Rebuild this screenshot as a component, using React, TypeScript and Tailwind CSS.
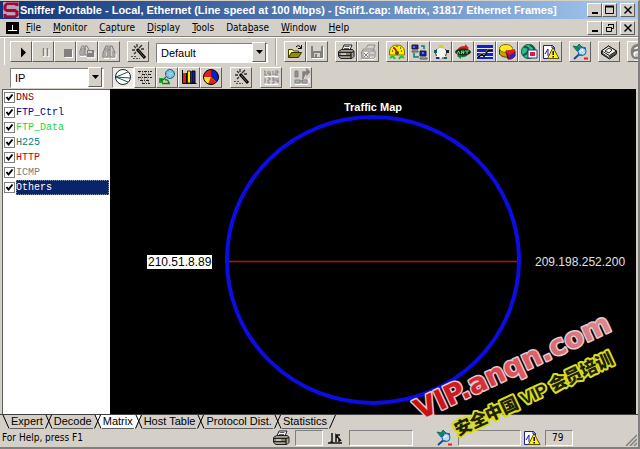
import { ReactNode } from 'react';

const raised = 'border border-t-white border-l-white border-r-[#606060] border-b-[#606060]';
const sunken = 'border border-t-[#808080] border-l-[#808080] border-r-white border-b-white';

const menus: [string, string, string][] = [
  ['', 'F', 'ile'],
  ['', 'M', 'onitor'],
  ['', 'C', 'apture'],
  ['', 'D', 'isplay'],
  ['', 'T', 'ools'],
  ['Data', 'b', 'ase'],
  ['', 'W', 'indow'],
  ['', 'H', 'elp'],
];

const protocols = [
  { name: 'DNS', color: 'text-[#800020]' },
  { name: 'FTP_Ctrl', color: 'text-[#000090]' },
  { name: 'FTP_Data', color: 'text-[#20d840]' },
  { name: 'H225', color: 'text-[#008080]' },
  { name: 'HTTP', color: 'text-[#c00010]' },
  { name: 'ICMP', color: 'text-[#808080]' },
  { name: 'Others', color: 'text-white', selected: true },
];

const tabs = ['Expert', 'Decode', 'Matrix', 'Host Table', 'Protocol Dist.', 'Statistics'];

function Icon({ children }: { children: ReactNode }) {
  return (
    <svg viewBox="0 0 18 18" className="size-[18px] shrink-0" fill="none" aria-hidden="true">
      {children}
    </svg>
  );
}

const PlayIcon = () => <Icon><path d="M9 4.500l5 5-5 5z" fill="#000" /></Icon>;
const PauseIcon = () => (
  <Icon>
    <path d="M10.500 6v8M14.500 6v8" stroke="#fff" strokeWidth="2" />
    <path d="M9.500 5v8M13.500 5v8" stroke="#808080" strokeWidth="1.500" />
  </Icon>
);
const StopIcon = () => (
  <Icon>
    <path d="M9 7h8v8H9z" fill="#fff" />
    <path d="M8 6h8v8H8z" fill="#808080" />
  </Icon>
);
const BinocularsSaveIcon = () => (
  <Icon>
    <path d="M2 12V8l2-5h2v9H2zM7 12V3h2l2 4v5z" stroke="#808080" />
    <path d="M4 5v6M6 6h2" stroke="#808080" />
    <path d="M9 7h7v7H9z" fill="#808080" />
    <path d="M10 8h4v2h-4z" fill="#d4d0c8" />
    <path d="M2 13.500h6M9 15h8V9" stroke="#fff" />
  </Icon>
);
const BinocularsIcon = () => (
  <Icon>
    <path d="M3 14v-4l3-7h2v11H3zM10 14V3h2l3 7v4h-5zM8 7h2" stroke="#808080" strokeWidth="1.200" />
    <path d="M5 9v4M13 8v5M6 5v4" stroke="#808080" />
    <path d="M4 15.500h5M11 15.500h5v-5" stroke="#fff" />
  </Icon>
);
const WandIcon = () => (
  <Icon>
    <path d="M8 6l8 9" stroke="#000" strokeWidth="3" />
    <path d="M9 7l6 7" stroke="#808080" strokeWidth=".8" />
    <path d="M5 3l2 2M8 1v3M13 2l-3 3M3 7h3M12 6h3M5 11l2-2" stroke="#303030" strokeWidth="1.300" />
    <path d="M2 13.500h5M4 15.500h7" stroke="#505050" strokeDasharray="2 1" />
  </Icon>
);
const OpenIcon = () => (
  <Icon>
    <path d="M2.500 14V6.500h4l1 1.500h5v2" fill="#ffff80" stroke="#404000" />
    <path d="M2.500 14.500l3-5h10l-3 5z" fill="#909000" stroke="#303000" />
    <path d="M10 4q3-3 5 1M15.500 2v3.500H12" stroke="#000" />
  </Icon>
);
const SaveIcon = () => (
  <Icon>
    <path d="M4 4h12v12H4z" fill="#fff" />
    <path d="M3 3h12v12H3z" fill="#808080" />
    <path d="M5 3h8v5H5zM6 10h6v4H6z" fill="#d4d0c8" />
    <path d="M7 11h2v4H7z" fill="#808080" />
  </Icon>
);
const PrintIcon = () => (
  <Icon>
    <path d="M5 7l2-5h8l-2 5" fill="#fff" stroke="#202020" />
    <path d="M7.500 3.500h5M7 5.500h5" stroke="#606060" />
    <path d="M1.500 8.500l3-2h11l1.500 2v5l-2 2h-11l-2.500-2z" fill="#a8a49c" stroke="#202020" />
    <path d="M2 9.500h12l3-1M14 10v5M2 12.500h12" stroke="#202020" strokeWidth="1.300" />
    <path d="M4 11h5" stroke="#fff" />
    <path d="M10 11h3" stroke="#909000" />
  </Icon>
);
const PrintAllIcon = () => (
  <Icon>
    <path d="M7 5l2-3h7l-2 6M2.500 9l2-3h10l1.500 2v6l-2 2h-11z" stroke="#909090" />
    <path d="M4 8h6v7H4zM11 8h4M11 12h4" fill="#eee" stroke="#909090" />
    <path d="M5 10l4 4M9 10l-4 4" stroke="#808080" />
    <path d="M3 16.500h12l2-2" stroke="#fff" />
  </Icon>
);
const GaugeIcon = () => (
  <Icon>
    <path d="M1.500 12V8q1-6 7.500-6t7.500 6v4z" fill="#ffee00" stroke="#807000" />
    <path d="M9 9L6 4.500" stroke="#d00000" strokeWidth="1.500" />
    <path d="M4 8h1M5 5h1M12 5h1M14 8h-1M9 3v1" stroke="#000" />
    <circle cx="9" cy="10" r="2" fill="#505000" />
    <path d="M2 15q3-3 5 1M11 16q2-4 5-1" stroke="#20c030" strokeWidth="2" />
  </Icon>
);
const NetworkIcon = () => (
  <Icon>
    <path d="M2 2h6v4H2zM10 8h6v5h-6z" fill="#1020b0" stroke="#202020" />
    <path d="M2 8h6v1H2zM10 15h7v1h-7z" fill="#fff" stroke="#505050" />
    <path d="M4 10v4h5M11 3h3v3" stroke="#008080" strokeWidth="1.500" />
    <path d="M3 4h2M12 10h2" stroke="#c0c0ff" />
  </Icon>
);
const RingIcon = () => (
  <Icon>
    <path d="M9 3L3 8l2 7h8l2-7z" fill="#f4f4f0" stroke="#303030" strokeDasharray="3 2" />
    <path d="M7 2h4v3H7z" fill="#d8d020" />
    <path d="M2 7h3v3H2zM12 14h3v2h-3z" fill="#106060" />
    <path d="M14 7h3v3h-3z" fill="#202020" />
    <path d="M4 14h3v2H4z" fill="#2020b0" />
  </Icon>
);
const ArtIcon = () => (
  <Icon>
    <path d="M3 8q1-5 8-5V1l4 4-4 3V6Q6 6 5 9z" fill="#d02020" />
    <path d="M15 9q-1 6-8 5v2l-4-3 4-4v2q5 1 6-2z" fill="#108030" />
    <ellipse cx="9" cy="9" rx="8" ry="3.500" fill="#103018" />
    <path d="M3 11l1.500-3L6 11M7.500 11V8H10v1.500H8M10 11l-1-1M11 8h4M13 8v3" stroke="#70ff90" strokeWidth=".8" />
  </Icon>
);
const HistoryIcon = () => (
  <Icon>
    <path d="M1 2h16v14H1z" fill="#1020d0" />
    <path d="M1 5.500h16M1 9.500h16M1 13.500h16" stroke="#e8e8ff" />
    <path d="M2 14l4-3 2 2 4-6h4" stroke="#000" strokeWidth="1.800" />
    <path d="M2 13l4-3 2 2 4-6h4" stroke="#e0e080" strokeWidth=".6" />
  </Icon>
);
const PieIcon = () => (
  <Icon>
    <path d="M1.500 6v5q3 4 9 3v-4" fill="#c0a800" stroke="#504000" />
    <ellipse cx="8" cy="5.500" rx="6.500" ry="4" fill="#ffe820" stroke="#807000" />
    <path d="M8 8h9v5q-3 4-7 3z" fill="#a01050" stroke="#500020" />
    <path d="M7 8l10-2q1 4-6 6z" fill="#e02020" />
    <path d="M12 12v4l5-2V9z" fill="#4020a0" />
  </Icon>
);
const GlobeIcon = () => (
  <Icon>
    <circle cx="8.500" cy="8.500" r="7" fill="#30c090" stroke="#105040" />
    <path d="M4 4q6 0 4 4t-5 4M10 2q5 2 4 6" stroke="#106040" strokeWidth="2" />
    <path d="M8 7h9v8H8z" fill="#fff" stroke="#303080" />
    <path d="M10 9h5v4h-5z" fill="#d02040" />
  </Icon>
);
const AlarmIcon = () => (
  <Icon>
    <path d="M1.500 15.500v-13h9l2 2v11z" fill="#fff" stroke="#1820a0" />
    <path d="M3 11l3-5v7M10 2v3h3" stroke="#1820a0" />
    <path d="M11 4.500l6 11H5.500z" fill="#ffee20" stroke="#605000" />
    <path d="M11.200 8v4M11.200 13v1.500" stroke="#000" strokeWidth="1.400" />
  </Icon>
);
const ExpertIcon = () => (
  <Icon>
    <path d="M2 3l4 1 2-3 3 3 4 1-3 3H6z" fill="#109070" stroke="#107060" />
    <circle cx="11" cy="8.500" r="4" fill="#b0e0f0" stroke="#2050b0" />
    <path d="M8 11.500l-5 4.500" stroke="#2040b0" strokeWidth="2" />
    <path d="M4 3l5 4M7 12h4" stroke="#107060" />
    <path d="M13 15.500h4" stroke="#e02020" strokeWidth="2" />
    <path d="M9 9q1-2 3-2" stroke="#fff" />
  </Icon>
);
const BookIcon = () => (
  <Icon>
    <path d="M1.500 8l7-5 8 5v3l-7 5-8-5z" fill="#707070" stroke="#101010" />
    <path d="M1.500 8l7-5 8 5-7 4.500z" fill="#f0f0e8" stroke="#101010" />
    <path d="M5 8l4-3 3 2-3 3zM2 10l8 4 7-4" stroke="#303030" />
    <path d="M3 9.500l6 4" stroke="#fff" />
  </Icon>
);
const SixIcon = () => (
  <Icon>
    <path d="M12 3Q4 3 4 10t5 6q4 0 4-4t-4-4-5 3" stroke="#fff" strokeWidth="3" />
    <path d="M11 2Q3 2 3 9t5 6q4 0 4-4T8 7t-5 3" stroke="#808080" strokeWidth="2.500" />
  </Icon>
);
const MapIcon = () => (
  <Icon>
    <circle cx="9" cy="9" r="7.500" fill="#fff" stroke="#202020" />
    <path d="M2 9l12-5M2 9l14 1M2 9l12 5" stroke="#205050" />
  </Icon>
);
const OutlineIcon = () => (
  <Icon>
    <path d="M2 3.500h14M6 6.500h9M2 9.500h14M4 12.500h10M6 15.500h8" stroke="#202020" strokeDasharray="3 1 1 1" />
    <path d="M3 5h10M5 8h8M2 11h12M6 14h9" stroke="#606060" strokeDasharray="1 2" />
  </Icon>
);
const HostIcon = () => (
  <Icon>
    <circle cx="12" cy="6" r="4.500" fill="#70b8d8" stroke="#206080" />
    <path d="M9 4q3 3 6 1M12 2v8M8 7h8" stroke="#b0e0f0" strokeWidth=".8" />
    <path d="M8 9l-3 3" stroke="#206080" strokeWidth="1.500" />
    <path d="M1 10h4v5H1z" fill="#10b010" />
    <path d="M2 12h3M7 12q3-1 4 3M4 15.500h8" stroke="#108010" strokeWidth="1.500" />
  </Icon>
);
const BarsIcon = () => (
  <Icon>
    <path d="M2.500 2v13.500h14" stroke="#000" />
    <path d="M3 5h3v10H3z" fill="#e02020" />
    <path d="M7.500 3h3v12h-3z" fill="#ffee00" stroke="#303000" />
    <path d="M12 3h3v12h-3z" fill="#1020b0" stroke="#000" />
    <path d="M6.500 5v10M11 3v12" stroke="#000" />
  </Icon>
);
const DonutIcon = () => (
  <Icon>
    <circle cx="9" cy="9" r="7.500" fill="#ffe010" />
    <path d="M9 9V1.500A7.500 7.500 0 0 0 1.500 9z" fill="#e02020" />
    <path d="M9 9V1.500A7.500 7.500 0 0 1 14.500 14z" fill="#1020c0" />
    <path d="M9 9l5.500 5A7.500 7.500 0 0 1 6 16z" fill="#e02020" />
    <circle cx="9" cy="9" r="7.500" stroke="#000" />
  </Icon>
);
const NumbersIcon = () => (
  <Icon>
    <path d="M2 3h1v4M2 7h3M6 3v3h3M8 3v5M11 3v4M13 3h3v2h-3v2h3M3 10v5M6 10h2v2H6v3h2M10 10h2v5h-2M10 12h2M14 10v3h3M16 10v5" stroke="#808080" />
    <path d="M3 8.500h13M3 16.500h13" stroke="#fff" />
  </Icon>
);
const TransferIcon = () => (
  <Icon>
    <path d="M3 3h3v6H3z" fill="#909090" stroke="#808080" />
    <path d="M11 11V4h4M15 1.500v5L17.500 4z" fill="#808080" stroke="#808080" strokeWidth="1.500" />
    <path d="M3 12h5v3H3zM10 12h5v3h-5zM8 13h3" fill="#b0b0b0" stroke="#808080" />
    <path d="M3 16.500h13M17 10v5" stroke="#fff" />
  </Icon>
);
const NetStatusIcon = () => (
  <Icon>
    <path d="M1 14h14M5 14V4M9 13V6l5 6M9 6h4M12 10v3" stroke="#101010" strokeWidth="1.500" />
    <path d="M3 13h3" stroke="#101010" />
  </Icon>
);

function ToolButton({ label, icon, pressed, disabled }: { label: string; icon: ReactNode; pressed?: boolean; disabled?: boolean }) {
  return (
    <button
      type="button"
      aria-label={label}
      disabled={disabled}
      className={`flex h-[21px] w-[22px] shrink-0 items-center justify-center ${pressed ? `${sunken} bg-[#eceae6]` : raised}`}
    >
      {icon}
    </button>
  );
}

function ButtonGroup({ children }: { children: ReactNode }) {
  return <div className="flex shrink-0">{children}</div>;
}

function Combo({ label, value, width }: { label: string; value: string; width: string }) {
  return (
    <div className={`relative shrink-0 ${width}`}>
      <select aria-label={label} className={`h-5 w-full appearance-none bg-white pl-1 text-[11px] leading-4 ${sunken}`}>
        <option>{value}</option>
      </select>
      <span className={`pointer-events-none absolute inset-y-[2px] right-[2px] flex w-[14px] items-center justify-center bg-[#d4d0c8] ${raised}`}>
        <svg viewBox="0 0 7 4" className="h-1 w-[7px]"><path d="M0 0h7L3.500 4z" /></svg>
      </span>
    </div>
  );
}

function CaptionButtons({ restore }: { restore?: boolean }) {
  const button = `flex h-[14px] w-[15px] items-center justify-center bg-[#d4d0c8] ${raised}`;
  return (
    <div className="ml-auto flex shrink-0">
      <button type="button" aria-label="Minimize" className={button}>
        <svg viewBox="0 0 10 10" className="size-[10px]"><path d="M2 7h6v2H2z" /></svg>
      </button>
      <button type="button" aria-label={restore ? 'Restore' : 'Maximize'} className={button}>
        <svg viewBox="0 0 10 10" className="size-[10px]" fill="none" stroke="#000">
          {restore ? <path d="M3.500 3V1.500h5v4H7M1.500 4.500h5v4h-5zM3 1.500h6M1 4.500h6" /> : <path d="M.5 1.500h8v7h-8zM0 1h9M0 2h9" />}
        </svg>
      </button>
      <button type="button" aria-label="Close" className={`ml-[3px] ${button}`}>
        <svg viewBox="0 0 10 10" className="size-[10px]"><path d="M1.500 1.500l7 7M8.500 1.500l-7 7" stroke="#000" strokeWidth="1.500" /></svg>
      </button>
    </div>
  );
}

function TitleBar() {
  return (
    <header className="flex h-[18px] shrink-0 items-center bg-linear-to-r from-[#123478] to-[#a6caf0] pr-[3px] pl-[3px]">
      <svg viewBox="0 0 16 18" className="mr-px h-[18px] w-4 shrink-0" fill="none">
        <path d="M0 1h16v16H0z" fill="#b8a0b8" />
        <path d="M14 5V3H4L2 5v3l2 1.500h8l2 1.500v3l-2 1.500H2V13" stroke="#a00838" strokeWidth="3" />
        <path d="M4 4.500h8M4 14h8" stroke="#e8b0c0" strokeWidth=".6" />
      </svg>
      <h1 className="font-['Liberation_Sans',Arial,sans-serif] text-[11px] leading-4 font-bold whitespace-nowrap text-white">
        Sniffer Portable - Local, Ethernet (Line speed at 100 Mbps) - [Snif1.cap: Matrix, 31817 Ethernet Frames]
      </h1>
      <CaptionButtons />
    </header>
  );
}

function MenuBar() {
  return (
    <nav className="flex h-[18px] shrink-0 items-center border-b border-[#808080] pr-[3px] pl-[6px]">
      <svg viewBox="0 0 13 12" className="h-3 w-[13px] shrink-0">
        <path d="M0 0h13v12H0z" />
        <path d="M2 8.500h9M6.500 8V3" stroke="#fff" />
      </svg>
      <div className="ml-[7px] flex gap-3 font-['DejaVu_Sans_Condensed','DejaVu_Sans',sans-serif] text-[10px] leading-4">
        {menus.map(([before, key, after]) => (
          <button key={key + after} type="button">
            {before}
            <span className="underline underline-offset-1">{key}</span>
            {after}
          </button>
        ))}
      </div>
      <CaptionButtons restore />
    </nav>
  );
}

function Toolbars() {
  return (
    <div className="shrink-0 overflow-hidden border-t border-white pl-[4px]">
      <div className="flex h-[27px] items-center gap-[7px] border-l border-white pl-[5px]">
        <ButtonGroup>
          <ToolButton label="Start" icon={<PlayIcon />} />
          <ToolButton label="Pause" icon={<PauseIcon />} disabled />
          <ToolButton label="Stop" icon={<StopIcon />} disabled />
          <ToolButton label="Stop and display" icon={<BinocularsSaveIcon />} disabled />
          <ToolButton label="Display" icon={<BinocularsIcon />} disabled />
        </ButtonGroup>
        <ToolButton label="Define filter" icon={<WandIcon />} />
        <Combo label="Filter" value="Default" width="w-[112px]" />
        <div className="h-full border-l border-[#a0a0a0] border-r border-r-white" />
        <ButtonGroup>
          <ToolButton label="Open" icon={<OpenIcon />} />
          <ToolButton label="Save" icon={<SaveIcon />} disabled />
        </ButtonGroup>
        <ButtonGroup>
          <ToolButton label="Print" icon={<PrintIcon />} />
          <ToolButton label="Abort printing" icon={<PrintAllIcon />} disabled />
        </ButtonGroup>
        <ButtonGroup>
          <ToolButton label="Dashboard" icon={<GaugeIcon />} />
          <ToolButton label="Host table" icon={<NetworkIcon />} />
          <ToolButton label="Matrix" icon={<RingIcon />} />
          <ToolButton label="Response time" icon={<ArtIcon />} />
          <ToolButton label="History" icon={<HistoryIcon />} />
          <ToolButton label="Protocol distribution" icon={<PieIcon />} />
          <ToolButton label="Global statistics" icon={<GlobeIcon />} />
          <ToolButton label="Alarm log" icon={<AlarmIcon />} />
        </ButtonGroup>
        <ToolButton label="Capture panel" icon={<ExpertIcon />} />
        <ToolButton label="Address book" icon={<BookIcon />} />
        <ToolButton label="Switch" icon={<SixIcon />} disabled />
      </div>
      <div className="flex h-[24px] items-center gap-2 pl-[6px]">
        <Combo label="Protocol" value="IP" width="w-[94px]" />
        <ButtonGroup>
          <ToolButton label="Map" icon={<MapIcon />} pressed />
          <ToolButton label="Outline" icon={<OutlineIcon />} />
          <ToolButton label="Detail" icon={<HostIcon />} />
          <ToolButton label="Bar" icon={<BarsIcon />} />
          <ToolButton label="Pie" icon={<DonutIcon />} />
        </ButtonGroup>
        <ToolButton label="Visual filter" icon={<WandIcon />} />
        <ToolButton label="Numbers" icon={<NumbersIcon />} disabled />
        <ToolButton label="Export" icon={<TransferIcon />} disabled />
      </div>
    </div>
  );
}

function ProtocolList() {
  return (
    <ul className="w-[108px] shrink-0 border-t border-l border-[#606060] bg-white pr-px font-['Liberation_Mono',monospace] text-[10px]">
      {protocols.map((p) => (
        <li key={p.name}>
          <label className="flex h-[15px] items-center">
            <span className="relative mx-px size-[11px] shrink-0">
              <input type="checkbox" defaultChecked className="block size-[11px] appearance-none border border-[#808080] bg-white" />
              <svg viewBox="0 0 11 11" className="pointer-events-none absolute inset-0 size-[11px]" fill="none">
                <path d="M2.500 5l2 2.500 4-5" stroke="#000" strokeWidth="2" />
              </svg>
            </span>
            <span className={`flex-1 leading-[15px] ${p.color} ${p.selected ? 'bg-[#0a246a] outline outline-dotted -outline-offset-1 outline-[#8090b0]' : ''}`}>
              {p.name}
            </span>
          </label>
        </li>
      ))}
    </ul>
  );
}

function TrafficMap() {
  return (
    <div className="min-w-0 flex-1 bg-black">
      <svg viewBox="0 0 526 325" className="size-full font-['Liberation_Sans',Arial,sans-serif]">
        <text x="263" y="22" textAnchor="middle" fill="#fff" fontSize="11" fontWeight="bold">Traffic Map</text>
        <path d="M117 172.500h292" stroke="#b01414" strokeWidth="1.500" />
        <ellipse cx="263" cy="171" rx="146" ry="143" fill="none" stroke="#0c0ce4" strokeWidth="4" />
        <path d="M37 166h65v14H37z" fill="#fff" />
        <text x="38" y="177" fill="#000" fontSize="12">210.51.8.89</text>
        <text x="425" y="177" fill="#e0e0e0" fontSize="12">209.198.252.200</text>
      </svg>
    </div>
  );
}

function TabEdge({ left, right, active }: { left?: boolean; right?: boolean; active?: 'left' | 'right' }) {
  return (
    <svg viewBox="0 0 9 14" className="h-[14px] w-[9px] shrink-0" fill="none">
      {active === 'left' && <path d="M0 0h7L1 14H0z" fill="#fff" />}
      {active === 'right' && <path d="M2 0h7v14H8z" fill="#fff" />}
      {right && <path d="M7.500 0L1.500 13.500" stroke="#000" />}
      {left && <path d="M2 0l6 13.500" stroke="#000" />}
    </svg>
  );
}

function TabBar() {
  return (
    <div role="tablist" className="flex h-[15px] shrink-0 border-t border-[#404040] pl-px font-['Liberation_Sans',Arial,sans-serif] text-[11px] leading-[13px]">
      <TabEdge left />
      {tabs.map((tab, i) => (
        <div key={tab} className="flex">
          <button
            type="button"
            role="tab"
            aria-selected={tab === 'Matrix'}
            className={`border-b border-[#606060] px-px whitespace-nowrap ${tab === 'Matrix' ? 'bg-white' : ''}`}
          >
            {tab}
          </button>
          <TabEdge
            right
            left={i < tabs.length - 1}
            active={tab === 'Matrix' ? 'left' : tabs[i + 1] === 'Matrix' ? 'right' : undefined}
          />
        </div>
      ))}
    </div>
  );
}

function StatusBar() {
  return (
    <footer className="flex h-[18px] shrink-0 items-center pl-[2px] font-['DejaVu_Sans_Condensed','DejaVu_Sans',sans-serif] text-[10px]">
      <span className="flex-1 leading-4">For Help, press F1</span>
      <PrintIcon />
      <span className={`ml-[5px] h-4 w-7 ${sunken}`} />
      <span className="ml-1 flex"><NetStatusIcon /></span>
      <span className={`ml-1 h-4 w-[64px] ${sunken}`} />
      <span className="ml-[22px] flex"><ExpertIcon /></span>
      <span className={`ml-[5px] h-4 w-[63px] ${sunken}`} />
      <span className="ml-[2px] flex"><AlarmIcon /></span>
      <span className={`ml-1 h-4 w-7 pl-[6px] leading-[14px] ${sunken}`}>79</span>
      <svg viewBox="0 0 12 12" className="mt-1 mr-px ml-[52px] size-3 shrink-0">
        <path d="M1 12L12 1M5 12l7-7M9 12l3-3" stroke="#808080" strokeWidth="1.500" />
      </svg>
    </footer>
  );
}

function Watermark() {
  return (
    <svg viewBox="0 0 240 149" className="pointer-events-none absolute right-0 bottom-0 h-[149px] w-[240px] overflow-visible">
      <defs>
        <linearGradient id="fade" x1="0" x2="1">
          <stop offset="0" stopColor="#c80c10" />
          <stop offset=".28" stopColor="#d02028" />
          <stop offset=".45" stopColor="#dc5058" />
          <stop offset="1" stopColor="#d88a90" />
        </linearGradient>
      </defs>
      <g transform="translate(22 122) rotate(-25)" fontWeight="bold" paintOrder="stroke" strokeLinejoin="round">
        <text fill="url(#fade)" stroke="#e8c8cc" strokeWidth="3" fontSize="28" fontFamily="DejaVu Sans, Verdana, sans-serif">VIP.anqn.com</text>
      </g>
      <g transform="translate(60 138) rotate(-25)" fontWeight="900" paintOrder="stroke" strokeLinejoin="round">
        <text fill="#202008" stroke="#d8dc20" strokeWidth="4" fontSize="17" fontFamily="Liberation Sans, Noto Sans CJK SC, sans-serif">安全中国 VIP 会员培训</text>
      </g>
    </svg>
  );
}

export default function App() {
  return (
    <main className="relative flex h-screen flex-col overflow-hidden border-t border-r-2 border-b-2 border-t-[#d4d0c8] border-r-[#808080] border-b-[#808080] bg-[#d4d0c8] font-['Liberation_Sans',Arial,sans-serif] text-black">
      <TitleBar />
      <MenuBar />
      <Toolbars />
      <div className="flex min-h-0 flex-1 pr-[2px] pl-[2px]">
        <ProtocolList />
        <TrafficMap />
      </div>
      <TabBar />
      <StatusBar />
      <Watermark />
    </main>
  );
}
